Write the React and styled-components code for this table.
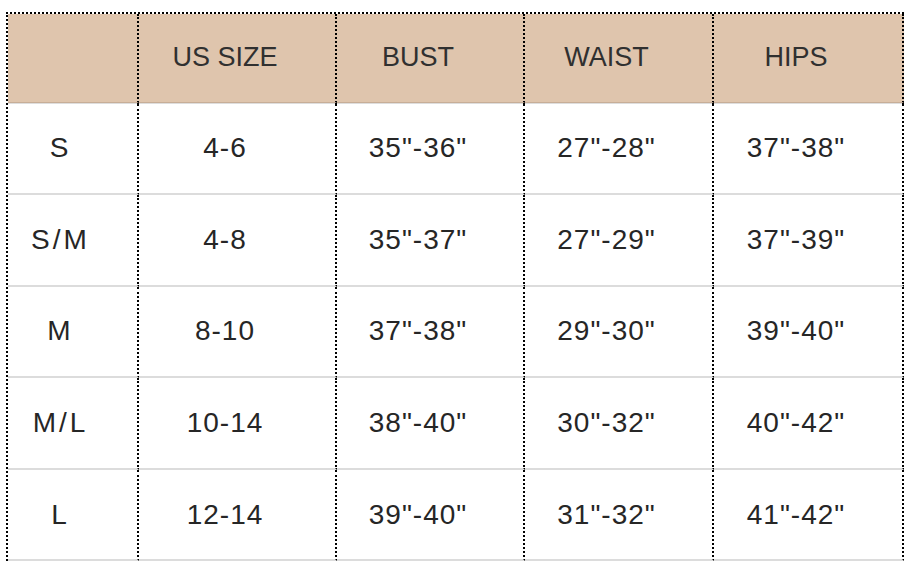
import React from "react";
import styled, { createGlobalStyle } from "styled-components";

const GlobalStyle = createGlobalStyle`
  body {
    margin: 0;
    background-color: #ffffff;
    font-family: "Liberation Sans", Arial, sans-serif;
  }
`;

const Wrapper = styled.div`
  padding: 12px 6px 0 6px;
`;

const Table = styled.table`
  width: 896px;
  border-collapse: separate;
  border-spacing: 0;
  table-layout: fixed;
  border-top: 2px dotted #000;
  border-left: 2px dotted #000;
`;

const HeadCell = styled.th`
  height: 87.5px;
  padding: 0 24px 0 0;
  background-color: #dfc5ad;
  border-right: 2px dotted #000;
  border-bottom: 1px solid #c7ae98;
  font-family: "Liberation Sans", Arial, sans-serif;
  font-weight: 400;
  font-size: 27px;
  color: #303030;
  text-align: center;
  vertical-align: middle;
`;

const HeadEdge = styled.tr`
  & > td {
    height: 1px;
    padding: 0;
    background-color: #dedede;
    border-right: 2px dotted #000;
  }
`;

const Cell = styled.td`
  height: 89.6px;
  padding: 0 24px 0 0;
  border-right: 2px dotted #000;
  border-bottom: 2px solid #dcdcdc;
  font-size: 28px;
  color: #262626;
  text-align: center;
  vertical-align: middle;
  letter-spacing: ${(p) => (p.$wide ? "3px" : "1px")};
`;

const columns = [
  { label: "", width: 131 },
  { label: "US SIZE", width: 198 },
  { label: "BUST", width: 188 },
  { label: "WAIST", width: 189 },
  { label: "HIPS", width: 190 },
];

const rows = [
  ["S", "4-6", '35"-36"', '27"-28"', '37"-38"'],
  ["S/M", "4-8", '35"-37"', '27"-29"', '37"-39"'],
  ["M", "8-10", '37"-38"', '29"-30"', '39"-40"'],
  ["M/L", "10-14", '38"-40"', '30"-32"', '40"-42"'],
  ["L", "12-14", '39"-40"', '31"-32"', '41"-42"'],
];

const SizeChart = () => (
  <Table>
    <colgroup>
      {columns.map((c, i) => (
        <col key={i} style={{ width: c.width }} />
      ))}
    </colgroup>
    <thead>
      <tr>
        {columns.map((c, i) => (
          <HeadCell key={i}>{c.label}</HeadCell>
        ))}
      </tr>
      <HeadEdge>
        {columns.map((c, i) => (
          <td key={i} />
        ))}
      </HeadEdge>
    </thead>
    <tbody>
      {rows.map((row) => (
        <tr key={row[0]}>
          {row.map((value, i) => (
            <Cell key={i} $wide={i === 0}>
              {value}
            </Cell>
          ))}
        </tr>
      ))}
    </tbody>
  </Table>
);

const App = () => (
  <>
    <GlobalStyle />
    <Wrapper>
      <SizeChart />
    </Wrapper>
  </>
);

export default App;
